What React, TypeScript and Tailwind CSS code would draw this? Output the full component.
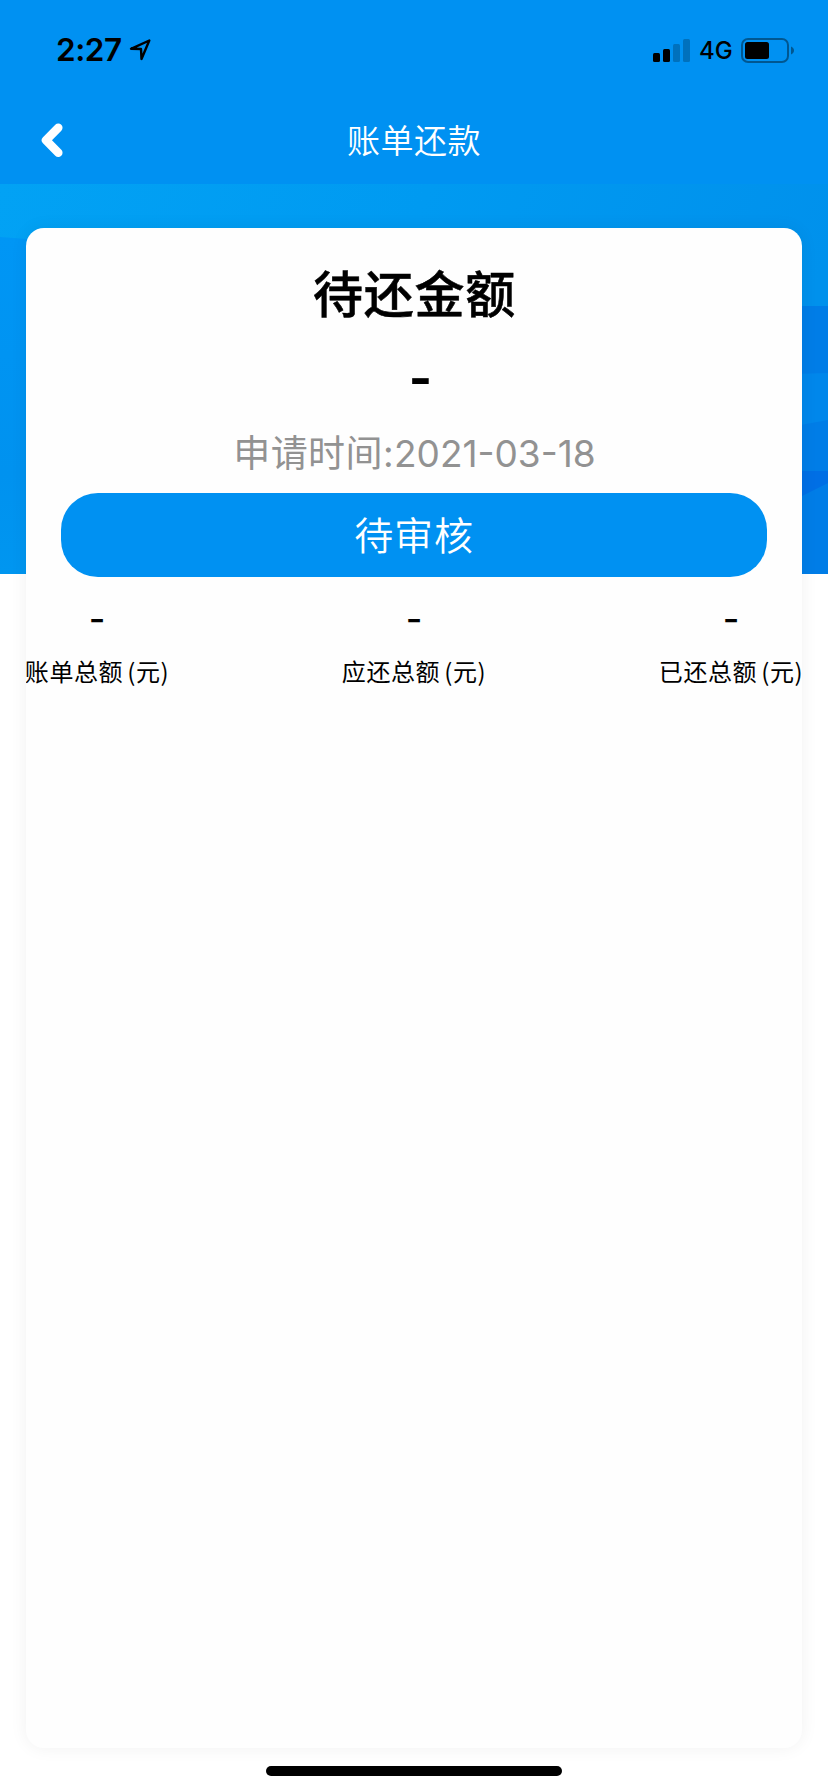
const totals = [
  { label: "账单总额", value: "-" },
  { label: "应还总额", value: "-" },
  { label: "已还总额", value: "-" },
];

function StatusBar() {
  return (
    <div className="flex h-24 items-center justify-between pt-1 pr-[34px] pl-14 text-black">
      <div className="flex items-center">
        <span className="w-[66px] text-[31.5px] leading-8 font-semibold tracking-[-0.4px]">
          2:27
        </span>
        <svg
          width="22"
          height="22"
          viewBox="0 0 22 22"
          fill="none"
          stroke="currentColor"
          strokeWidth="2.4"
          strokeLinejoin="round"
          className="ml-[7px]"
        >
          <path d="M2 9.8 20.3 1.500 12.500 20 12 10Z" />
        </svg>
      </div>
      <div className="flex items-center">
        <svg width="37" height="23" viewBox="0 0 37 23">
          <rect x="0" y="14" width="7" height="9" rx="1.5" />
          <rect x="10" y="10" width="7" height="13" rx="1.5" />
          <rect x="20" y="5" width="7" height="18" rx="1.5" opacity=".22" />
          <rect x="30" y="0" width="7" height="23" rx="1.5" opacity=".22" />
        </svg>
        <span className="ml-[9px] w-8 pt-0.5 text-[24px] leading-6 font-medium">
          4G
        </span>
        <svg width="53" height="25" viewBox="0 0 53 25" className="ml-[10px]">
          <rect
            x="1"
            y="1"
            width="46"
            height="23"
            rx="6"
            fill="none"
            stroke="#000"
            strokeWidth="2"
            opacity=".4"
          />
          <rect x="4" y="4" width="24" height="17" rx="2.5" />
          <path d="M50 8.5c4 1.500 4 6.500 0 8Z" opacity=".4" />
        </svg>
      </div>
    </div>
  );
}

function NavBar() {
  return (
    <div className="grid h-[88px] grid-cols-[100px_1fr_100px] items-center text-white">
      <svg
        width="24"
        height="36"
        viewBox="0 0 24 36"
        fill="none"
        stroke="currentColor"
        strokeWidth="8.500"
        strokeLinecap="round"
        strokeLinejoin="round"
        className="ml-10"
      >
        <path d="M18.300 5.700 6 18.200 18.300 30.700" />
      </svg>
      <h1 className="pt-0.5 text-center text-[33px] leading-[44px] font-[350] tracking-[0.500px]">
        账单还款
      </h1>
    </div>
  );
}

function Banner() {
  return (
    <svg
      viewBox="0 0 828 390"
      className="col-start-1 row-start-1 h-[390px] w-full"
    >
      <defs>
        <linearGradient id="sky" x1="0" y1="0" x2="1" y2="0.2">
          <stop offset="0" stopColor="#02a2f4" />
          <stop offset="0.500" stopColor="#009af1" />
          <stop offset="1" stopColor="#0091ec" />
        </linearGradient>
        <linearGradient id="edge" x1="0" y1="0" x2="0" y2="1">
          <stop offset="0" stopColor="#0096f5" />
          <stop offset="0.700" stopColor="#0092ef" />
          <stop offset="1" stopColor="#0096f0" />
        </linearGradient>
      </defs>
      <rect width="828" height="390" fill="url(#sky)" />
      <path d="M0 53 40 56V390H0Z" fill="url(#edge)" />
      <path d="M790 122h38v268h-38Z" fill="#007de7" />
      <path d="M790 190 828 189V236L790 243Z" fill="#0087eb" />
      <path d="M790 287h38v12l-38 19Z" fill="#006fe5" />
    </svg>
  );
}

function BillCard() {
  return (
    <section className="z-10 col-start-1 row-start-1 mx-[26px] mt-11 flex h-[1520px] flex-col overflow-hidden rounded-[18px] bg-[#fefefe] shadow-[0_0_18px_rgba(0,0,0,0.06)]">
      <h2 className="mt-[33px] pl-px text-center text-[50px] leading-[68px] font-medium tracking-[0.800px] [-webkit-text-stroke:0.5px]">
        待还金额
      </h2>
      <p className="mt-[15px] pl-[13px] text-center text-[50px] leading-[68px] font-bold">
        -
      </p>
      <p className="mt-4 flex justify-center pl-px text-[37px] leading-[52px] text-[#929292]">
        <span className="tracking-[0.400px]">申请时间:</span>
        <span>2021-03-18</span>
      </p>
      <button className="mx-[35px] mt-[13px] h-[84px] shrink-0 rounded-[37px] bg-[#0091f2] pt-0.5 text-[39px] font-[350] tracking-[0.800px] text-white">
        待审核
      </button>
      <ul className="mt-5 flex justify-between">
        {totals.map((item) => (
          <li key={item.label} className="flex w-[142px] flex-col items-center">
            <span className="text-[36px] leading-[44px] font-medium">
              {item.value}
            </span>
            <span className="mt-[13px] font-['Noto_Sans_CJK_SC',sans-serif] text-[24px] leading-[34px] tracking-[0.600px] whitespace-nowrap">
              {item.label}
              <span className="ml-1">(元)</span>
            </span>
          </li>
        ))}
      </ul>
    </section>
  );
}

export default function App() {
  return (
    <div className="flex h-[1792px] w-[828px] flex-col overflow-hidden bg-white font-['Inter','Noto_Sans_CJK_SC',sans-serif] text-black">
      <header className="h-[184px] bg-[#0091f2]">
        <StatusBar />
        <NavBar />
      </header>
      <main className="grid items-start">
        <Banner />
        <BillCard />
      </main>
      <div className="mx-auto mt-[18px] h-[10px] w-[296px] rounded-full bg-black" />
    </div>
  );
}
